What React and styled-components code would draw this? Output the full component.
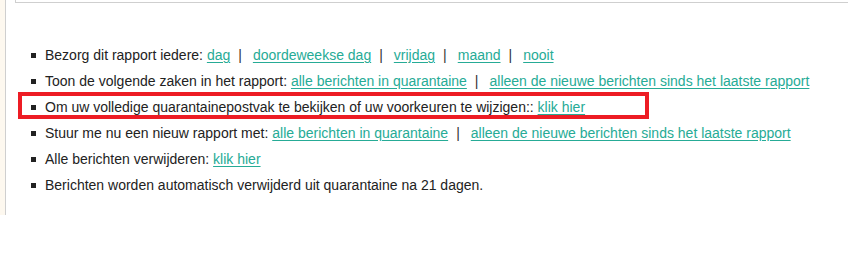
import React from "react";
import styled, { createGlobalStyle } from "styled-components";

const Global = createGlobalStyle`
  html, body { margin: 0; padding: 0; background: #fff; }
  body { font-family: "Liberation Sans", Arial, sans-serif; font-size: 14px; color: #222; }
`;

const Page = styled.div`
  display: flex;
  align-items: flex-start;
  width: 848px;
  overflow: hidden;
`;

const Sidebar = styled.div`
  flex: 0 0 5px;
  height: 215px;
  background: #fdf8ef;
  border-right: 1px solid #cfcfcf;
`;

const Main = styled.div`
  flex: 1;
  padding-left: 9px;
  min-width: 0;
`;

const TopBox = styled.div`
  height: 2px;
  border: 1px solid #cfcfcf;
  border-top: none;
  margin-right: -20px;
`;

const List = styled.ul`
  list-style: none;
  margin: 39px 0 0 0;
  padding: 0 0 0 3px;
`;

const Item = styled.li`
  position: relative;
  display: flex;
  align-items: center;
  height: 26px;
  line-height: 26px;
  white-space: nowrap;

  ${(p) =>
    p.$highlight &&
    `
    &::after {
      content: "";
      position: absolute;
      left: 0;
      top: -2px;
      width: 631px;
      height: 27px;
      box-sizing: border-box;
      border: 4px solid #ed1c24;
      pointer-events: none;
    }
  `}
`;

const Bullet = styled.span`
  flex: 0 0 5px;
  width: 5px;
  height: 5px;
  background: #222;
  margin: 1px 9px 0 13px;
`;

const Link = styled.a`
  color: #26ab96;
  text-decoration: underline;
  text-underline-offset: 2px;
  cursor: pointer;
`;

const Sep = styled.span`
  color: #333;
  margin: 0 11px 0 8px;
`;

const Links = ({ items }) =>
  items.map((t, i) => (
    <React.Fragment key={t}>
      {i > 0 && <Sep>|</Sep>}
      <Link>{t}</Link>
    </React.Fragment>
  ));

export default function App() {
  return (
    <>
      <Global />
      <Page>
        <Sidebar />
        <Main>
          <TopBox />
          <List>
            <Item>
              <Bullet />
              <span>Bezorg dit rapport iedere:&nbsp;</span>
              <Links items={["dag", "doordeweekse dag", "vrijdag", "maand", "nooit"]} />
            </Item>
            <Item>
              <Bullet />
              <span>Toon de volgende zaken in het rapport:&nbsp;</span>
              <Links
                items={[
                  "alle berichten in quarantaine",
                  "alleen de nieuwe berichten sinds het laatste rapport",
                ]}
              />
            </Item>
            <Item $highlight>
              <Bullet />
              <span>
                Om uw volledige quarantainepostvak te bekijken of uw voorkeuren te wijzigen::&nbsp;
              </span>
              <Link>klik hier</Link>
            </Item>
            <Item>
              <Bullet />
              <span>Stuur me nu een nieuw rapport met:&nbsp;</span>
              <Links
                items={[
                  "alle berichten in quarantaine",
                  "alleen de nieuwe berichten sinds het laatste rapport",
                ]}
              />
            </Item>
            <Item>
              <Bullet />
              <span>Alle berichten verwijderen:&nbsp;</span>
              <Link>klik hier</Link>
            </Item>
            <Item>
              <Bullet />
              <span>Berichten worden automatisch verwijderd uit quarantaine na 21 dagen.</span>
            </Item>
          </List>
        </Main>
      </Page>
    </>
  );
}
